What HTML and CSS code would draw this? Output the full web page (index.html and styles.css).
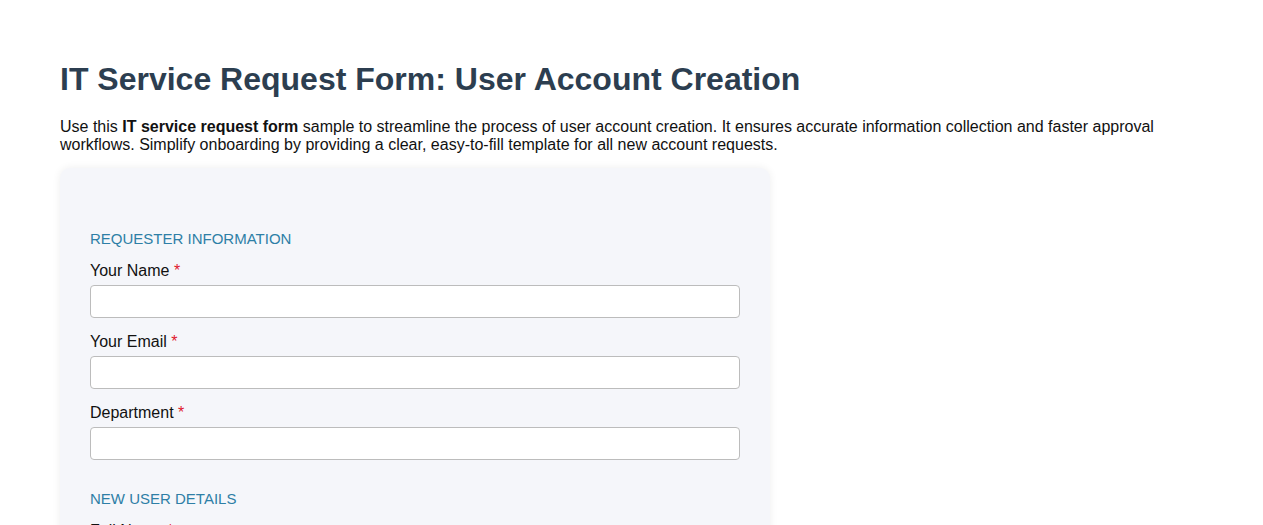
FILE: index.html
```html
<!DOCTYPE html>
<html lang="en">
<head>
<meta charset="utf-8">
<title>IT Service Request Form: User Account Creation</title>
<link rel="stylesheet" href="styles.css">
</head>
<body>
<main class="page">
  <h1 class="title">IT Service Request Form: User Account Creation</h1>
  <p class="intro">Use this <strong>IT service request form</strong> sample to streamline the process of user account creation. It ensures accurate information collection and faster approval workflows. Simplify onboarding by providing a clear, easy-to-fill template for all new account requests.</p>
  <form class="card">
    <div class="card-spacer"></div>
    <h2 class="section">REQUESTER INFORMATION</h2>
    <div class="field">
      <label class="label">Your Name <span class="req">*</span></label>
      <input class="input" type="text">
    </div>
    <div class="field">
      <label class="label">Your Email <span class="req">*</span></label>
      <input class="input" type="email">
    </div>
    <div class="field">
      <label class="label">Department <span class="req">*</span></label>
      <input class="input" type="text">
    </div>
    <h2 class="section section-next">NEW USER DETAILS</h2>
    <div class="field">
      <label class="label">Full Name <span class="req">*</span></label>
      <input class="input" type="text">
    </div>
    <div class="field">
      <label class="label">Job Title <span class="req">*</span></label>
      <input class="input" type="text">
    </div>
  </form>
</main>
</body>
</html>
```
FILE: styles.css
```css
html, body {
  margin: 0;
  padding: 0;
  background: #ffffff;
}
body {
  font-family: "Liberation Sans", Arial, sans-serif;
  color: #111;
}
.page {
  padding: 61px 60px 40px;
}
.title {
  margin: 0 0 20px;
  font-size: 32px;
  font-weight: bold;
  color: #2c3e50;
  line-height: 37px;
}
.intro {
  margin: 0 0 14px;
  font-size: 16px;
  line-height: 18px;
  max-width: 1110px;
}
.intro strong {
  font-weight: bold;
}
.card {
  width: 650px;
  padding: 30px;
  background: #f5f6fa;
  border-radius: 10px;
  box-shadow: 0 0 8px rgba(0, 0, 0, 0.07);
}
.card-spacer {
  height: 32px;
}
.section {
  margin: 0 0 13px;
  font-size: 15px;
  font-weight: normal;
  line-height: 18px;
  color: #2e7fa6;
}
.section-next {
  margin-top: 30px;
}
.field {
  margin-bottom: 14px;
}
.label {
  display: block;
  font-size: 16px;
  line-height: 18px;
  padding-top: 1px;
  margin-bottom: 5px;
  color: #111;
}
.req {
  color: #e0182d;
}
.input {
  display: block;
  box-sizing: border-box;
  width: 100%;
  height: 33px;
  margin: 0;
  border: 1px solid #bcbcbc;
  border-radius: 4px;
  background: #fff;
  font-family: inherit;
  font-size: 16px;
}
```
